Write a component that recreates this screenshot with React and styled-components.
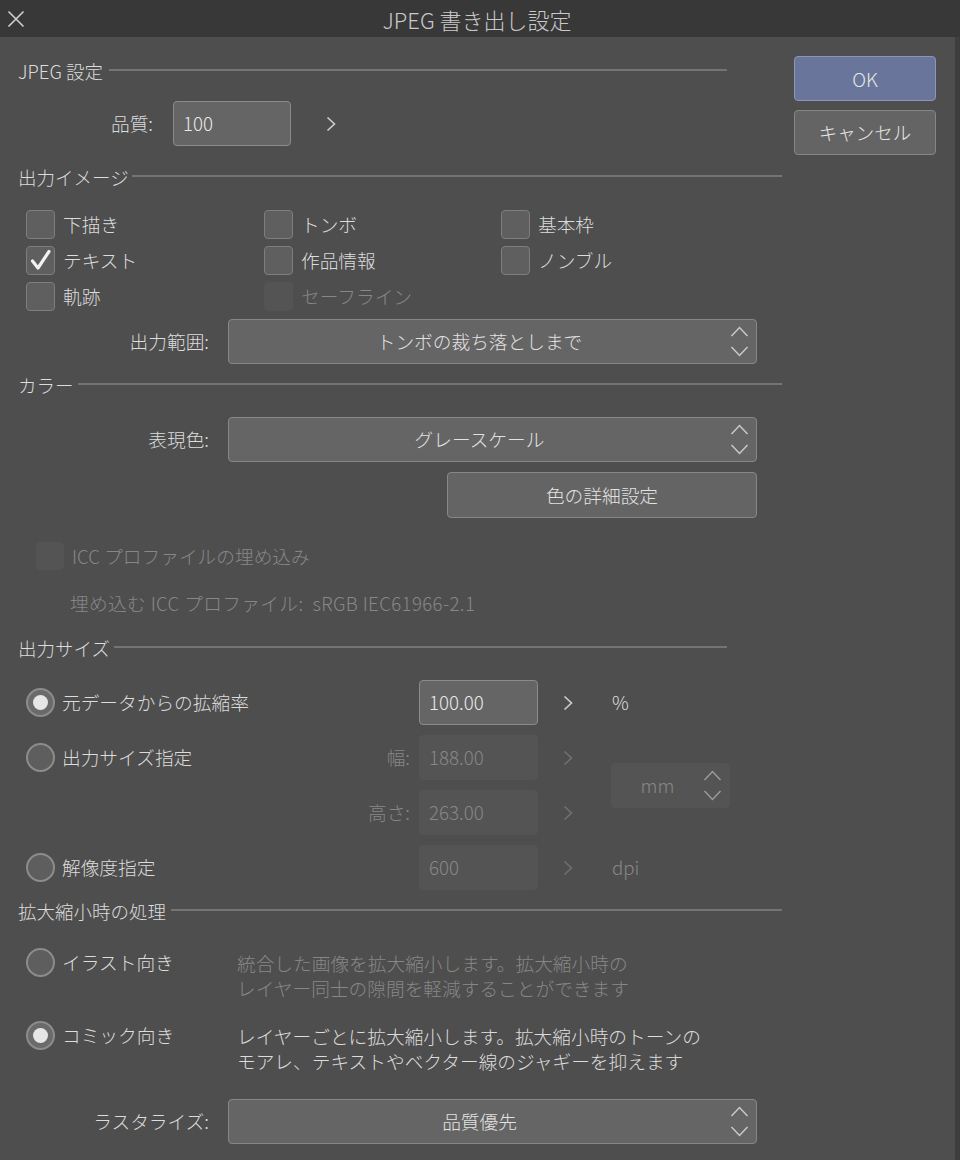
import React from 'react';
import styled, { createGlobalStyle } from 'styled-components';

const FONT = '"Noto Sans CJK JP", "Noto Sans", sans-serif';
const TEXT = '#dcdcdc';
const DIM = '#878787';
const BODY_BG = '#4e4e4e';

const GlobalStyle = createGlobalStyle`
  html, body {
    margin: 0;
    padding: 0;
    background: ${BODY_BG};
  }
  body {
    font-family: ${FONT};
    font-weight: 300;
    color: ${TEXT};
  }
`;

const Window = styled.div`
  width: 960px;
  height: 1160px;
  overflow: hidden;
  display: flex;
  flex-direction: column;
  background: ${BODY_BG};
`;

const TitleBar = styled.div`
  flex: 0 0 37px;
  display: grid;
  grid-template-columns: 40px 1fr 40px;
  align-items: center;
  background: #383838;
  color: #c9c9c9;
  font-size: 22px;
  line-height: 1;
`;

const CloseButton = styled.div`
  display: flex;
  align-items: center;
  justify-content: center;
  width: 32px;
  height: 37px;
  color: #cfcfcf;
`;

const Title = styled.div`
  text-align: center;
  margin-left: -6px;
`;

const Body = styled.div`
  flex: 1;
  display: flex;
  padding-left: 18px;
  border-right: 5px solid #3e3e3e;
`;

const Main = styled.div`
  flex: 0 0 764px;
  display: flex;
  flex-direction: column;
`;

const Side = styled.div`
  flex: 0 0 142px;
  margin-left: 12px;
  padding-top: 19px;
  display: flex;
  flex-direction: column;
  gap: 9px;
`;

const DialogButton = styled.div`
  height: 45px;
  box-sizing: border-box;
  display: flex;
  align-items: center;
  justify-content: center;
  border-radius: 4px;
  border: 1.5px solid ${p => (p.$primary ? '#8c97b7' : '#868686')};
  background: ${p => (p.$primary ? '#69759a' : '#646464')};
  color: #e6e6e6;
  font-size: ${p => (p.$primary ? '19px' : '18.5px')};
  line-height: 1;
`;

const SectionHead = styled.div`
  display: flex;
  align-items: center;
  height: 30px;
  margin-top: ${p => p.$top}px;
  margin-right: ${p => p.$trim || 0}px;
  font-size: 18.5px;
  line-height: 1;
  color: ${TEXT};

  &::after {
    content: '';
    flex: 1;
    height: 2px;
    margin-left: ${p => p.$gap ?? 5}px;
    margin-bottom: 3px;
    background: #747474;
  }
`;

const Row = styled.div`
  display: flex;
  align-items: center;
  height: ${p => p.$h || 45}px;
  margin-top: ${p => p.$top}px;
  padding-left: ${p => p.$indent || 0}px;
  font-size: 18.7px;
  line-height: 1;
  letter-spacing: ${p => p.$track || 0}px;
  color: ${p => (p.$dim ? DIM : TEXT)};
`;

const FieldLabel = styled.div`
  width: ${p => p.$w}px;
  margin-right: ${p => p.$gap}px;
  text-align: right;
  font-size: 18.7px;
  line-height: 1;
  color: ${p => (p.$dim ? DIM : TEXT)};
`;

const NumberBox = styled.div`
  box-sizing: border-box;
  width: ${p => p.$w || 119}px;
  height: 45px;
  display: flex;
  align-items: center;
  padding-left: 9px;
  border-radius: 4px;
  font-size: 18.7px;
  line-height: 1;
  background: ${p => (p.$disabled ? '#545454' : '#656565')};
  border: 1.5px solid ${p => (p.$disabled ? '#545454' : '#8b8b8b')};
  color: ${p => (p.$disabled ? DIM : '#eaeaea')};
`;

const Stepper = styled.div`
  display: flex;
  align-items: center;
  margin-left: ${p => p.$left || 0}px;
  color: ${p => (p.$dim ? '#707070' : '#cfcfcf')};
`;

const Select = styled.div`
  box-sizing: border-box;
  width: ${p => p.$w || 529}px;
  height: 45px;
  display: flex;
  align-items: center;
  border-radius: 4px;
  background: ${p => (p.$disabled ? '#545454' : '#656565')};
  border: 1.5px solid ${p => (p.$disabled ? '#545454' : '#878787')};
  color: ${p => (p.$disabled ? DIM : '#e2e2e2')};
  font-size: 18.7px;
  line-height: 1;
`;

const SelectValue = styled.div`
  flex: 1;
  text-align: center;
`;

const SelectArrows = styled.div`
  flex: 0 0 auto;
  display: flex;
  align-items: center;
  margin-right: 7px;
  color: ${p => (p.$dim ? '#9a9a9a' : '#c9c9c9')};
`;

const WideButton = styled.div`
  box-sizing: border-box;
  width: 310px;
  height: 46px;
  margin-left: 429px;
  display: flex;
  align-items: center;
  justify-content: center;
  border-radius: 4px;
  background: #646464;
  border: 1.5px solid #878787;
  color: #e2e2e2;
  font-size: 18.7px;
  line-height: 1;
`;

const CheckGrid = styled.div`
  display: grid;
  grid-template-columns: 238px 237px 1fr;
  grid-auto-rows: 30px;
  row-gap: 6px;
  margin-top: 17px;
  padding-left: 8px;
`;

const Option = styled.label`
  display: flex;
  align-items: center;
  gap: ${p => p.$gap ?? 8}px;
  font-size: 18.7px;
  line-height: 1;
  color: ${p => (p.$dim ? DIM : TEXT)};
`;

const Box = styled.span`
  box-sizing: border-box;
  flex: 0 0 auto;
  width: ${p => p.$size || 29}px;
  height: ${p => p.$size || 29}px;
  border-radius: 4px;
  display: flex;
  align-items: center;
  background: ${p => (p.$disabled ? '#545454' : '#5f5f5f')};
  border: 1.5px solid ${p => (p.$disabled ? '#545454' : '#7e7e7e')};
`;

const Radio = styled.span`
  box-sizing: border-box;
  flex: 0 0 auto;
  width: 29px;
  height: 29px;
  border-radius: 50%;
  display: flex;
  align-items: center;
  justify-content: center;
  border: 2px solid #8c8c8c;
  background: ${p => (p.$on ? '#6a6a6a' : '#5e5e5e')};

  &::after {
    content: '';
    display: ${p => (p.$on ? 'block' : 'none')};
    width: 15px;
    height: 15px;
    border-radius: 50%;
    background: #e6e6e6;
  }
`;

const SizeGrid = styled.div`
  display: grid;
  grid-template-columns: 401px 119px 73px 1fr;
  grid-template-rows: repeat(4, 45px);
  row-gap: 10px;
  margin-top: 17px;
  align-items: center;
`;

const SizeLead = styled.div`
  grid-column: 1;
  grid-row: ${p => p.$row};
  display: flex;
  align-items: center;
  justify-content: space-between;
  padding-left: 8px;
  padding-right: 9px;
`;

const Cell = styled.div`
  grid-column: ${p => p.$col};
  grid-row: ${p => p.$row};
  display: flex;
  align-items: center;
  padding-left: ${p => p.$pad || 0}px;
  font-size: 18.7px;
  line-height: 1;
  color: ${p => (p.$dim ? DIM : TEXT)};
`;

const UnitSelect = styled(Select)`
  grid-column: 4;
  grid-row: 2 / span 2;
  align-self: center;
  margin-top: 1px;
`;

const ScaleOption = styled.div`
  display: grid;
  grid-template-columns: 219px 1fr;
  margin-top: ${p => p.$top}px;
`;

const ScaleLead = styled.div`
  padding-left: 8px;
  height: 30px;
  display: flex;
  align-items: center;
`;

const Description = styled.div`
  padding-top: 3px;
  font-size: 18.7px;
  line-height: 25px;
  color: ${p => (p.$dim ? DIM : TEXT)};
`;

function Chevron() {
  return (
    <svg width="11" height="16" viewBox="0 0 11 16" fill="none">
      <polyline points="1.5,1.5 8.5,8 1.5,14.5" stroke="currentColor" strokeWidth="1.6" />
    </svg>
  );
}

function UpDown() {
  return (
    <svg width="19" height="31" viewBox="0 0 19 31" fill="none">
      <polyline points="1.5,10 9.5,1.5 17.5,10" stroke="currentColor" strokeWidth="1.5" />
      <polyline points="1.5,21 9.5,29.5 17.5,21" stroke="currentColor" strokeWidth="1.5" />
    </svg>
  );
}

function CheckMark() {
  return (
    <svg width="26" height="26" viewBox="0 0 26 26" fill="none" style={{ marginLeft: 1 }}>
      <polyline points="4.5,14 10,21 21,4.5" stroke="#f2f2f2" strokeWidth="3.2" strokeLinecap="round" strokeLinejoin="round" />
    </svg>
  );
}

function Checkbox({ label, checked, disabled, size, gap }) {
  return (
    <Option $dim={disabled} $gap={gap}>
      <Box $disabled={disabled} $size={size}>{checked && <CheckMark />}</Box>
      {label}
    </Option>
  );
}

function RadioOption({ label, on }) {
  return (
    <Option $gap={7}>
      <Radio $on={on} />
      {label}
    </Option>
  );
}

function SelectField({ label, value }) {
  return (
    <Row $top={0} $h={45}>
      <FieldLabel $w={191} $gap={19}>{label}</FieldLabel>
      <Select>
        <SelectValue>{value}</SelectValue>
        <SelectArrows><UpDown /></SelectArrows>
      </Select>
    </Row>
  );
}

const imageOptions = [
  { label: '下描き' },
  { label: 'トンボ' },
  { label: '基本枠' },
  { label: 'テキスト', checked: true },
  { label: '作品情報' },
  { label: 'ノンブル' },
  { label: '軌跡' },
  { label: 'セーフライン', disabled: true },
];

const sizeRows = [
  { row: 1, radio: '元データからの拡縮率', on: true, value: '100.00', unit: '%' },
  { row: 2, radio: '出力サイズ指定', sub: '幅:', value: '188.00', disabled: true },
  { row: 3, sub: '高さ:', value: '263.00', disabled: true },
  { row: 4, radio: '解像度指定', value: '600', disabled: true, unit: 'dpi' },
];

const Spaced = styled.div`
  margin-top: ${p => p.$top}px;
`;

export default function App() {
  return (
    <Window>
      <GlobalStyle />
      <TitleBar>
        <CloseButton>
          <svg width="18" height="18" viewBox="0 0 18 18">
            <path d="M1.5 1.5 L16.5 16.5 M16.5 1.5 L1.5 16.5" stroke="currentColor" strokeWidth="1.6" />
          </svg>
        </CloseButton>
        <Title>JPEG 書き出し設定</Title>
        <span />
      </TitleBar>

      <Body>
        <Main>
          <SectionHead $top={19} $trim={55} $gap={6}>JPEG 設定</SectionHead>
          <Row $top={15}>
            <FieldLabel $w={135} $gap={20}>品質:</FieldLabel>
            <NumberBox $w={118}>100</NumberBox>
            <Stepper $left={35}><Chevron /></Stepper>
          </Row>

          <SectionHead $top={16} $gap={3}>出力イメージ</SectionHead>
          <CheckGrid>
            {imageOptions.map(opt => (
              <Checkbox key={opt.label} label={opt.label} checked={opt.checked} disabled={opt.disabled} />
            ))}
          </CheckGrid>
          <Spaced $top={8}>
            <SelectField label="出力範囲:" value="トンボの裁ち落としまで" />
          </Spaced>

          <SectionHead $top={6} $gap={4}>カラー</SectionHead>
          <Spaced $top={17}>
            <SelectField label="表現色:" value="グレースケール" />
          </Spaced>
          <Spaced $top={10}>
            <WideButton>色の詳細設定</WideButton>
          </Spaced>
          <Row $top={23} $h={30} $indent={18}>
            <Checkbox label="ICC プロファイルの埋め込み" disabled size={28} />
          </Row>
          <Row $top={17} $h={30} $indent={52} $track={0.35} $dim>
            埋め込む ICC プロファイル:&nbsp;&nbsp;sRGB IEC61966-2.1
          </Row>

          <SectionHead $top={15} $trim={55} $gap={4}>出力サイズ</SectionHead>
          <SizeGrid>
            {sizeRows.map(r => (
              <React.Fragment key={r.row}>
                <SizeLead $row={r.row}>
                  {r.radio ? <RadioOption label={r.radio} on={r.on} /> : <span />}
                  {r.sub && <FieldLabel $w={60} $gap={0} $dim>{r.sub}</FieldLabel>}
                </SizeLead>
                <Cell $col={2} $row={r.row}>
                  <NumberBox $disabled={r.disabled}>{r.value}</NumberBox>
                </Cell>
                <Cell $col={3} $row={r.row} $pad={25}>
                  <Stepper $dim={r.disabled}><Chevron /></Stepper>
                </Cell>
                {r.unit && (
                  <Cell $col={4} $row={r.row} $pad={1} $dim={r.disabled}>{r.unit}</Cell>
                )}
              </React.Fragment>
            ))}
            <UnitSelect $w={119} $disabled>
              <SelectValue>mm</SelectValue>
              <SelectArrows $dim><UpDown /></SelectArrows>
            </UnitSelect>
          </SizeGrid>

          <SectionHead $top={6} $gap={5}>拡大縮小時の処理</SectionHead>
          <ScaleOption $top={21}>
            <ScaleLead><RadioOption label="イラスト向き" /></ScaleLead>
            <Description $dim>
              統合した画像を拡大縮小します。拡大縮小時の<br />
              レイヤー同士の隙間を軽減することができます
            </Description>
          </ScaleOption>
          <ScaleOption $top={20}>
            <ScaleLead><RadioOption label="コミック向き" on /></ScaleLead>
            <Description>
              レイヤーごとに拡大縮小します。拡大縮小時のトーンの<br />
              モアレ、テキストやベクター線のジャギーを抑えます
            </Description>
          </ScaleOption>
          <Spaced $top={26}>
            <SelectField label="ラスタライズ:" value="品質優先" />
          </Spaced>
        </Main>

        <Side>
          <DialogButton $primary>OK</DialogButton>
          <DialogButton>キャンセル</DialogButton>
        </Side>
      </Body>
    </Window>
  );
}
